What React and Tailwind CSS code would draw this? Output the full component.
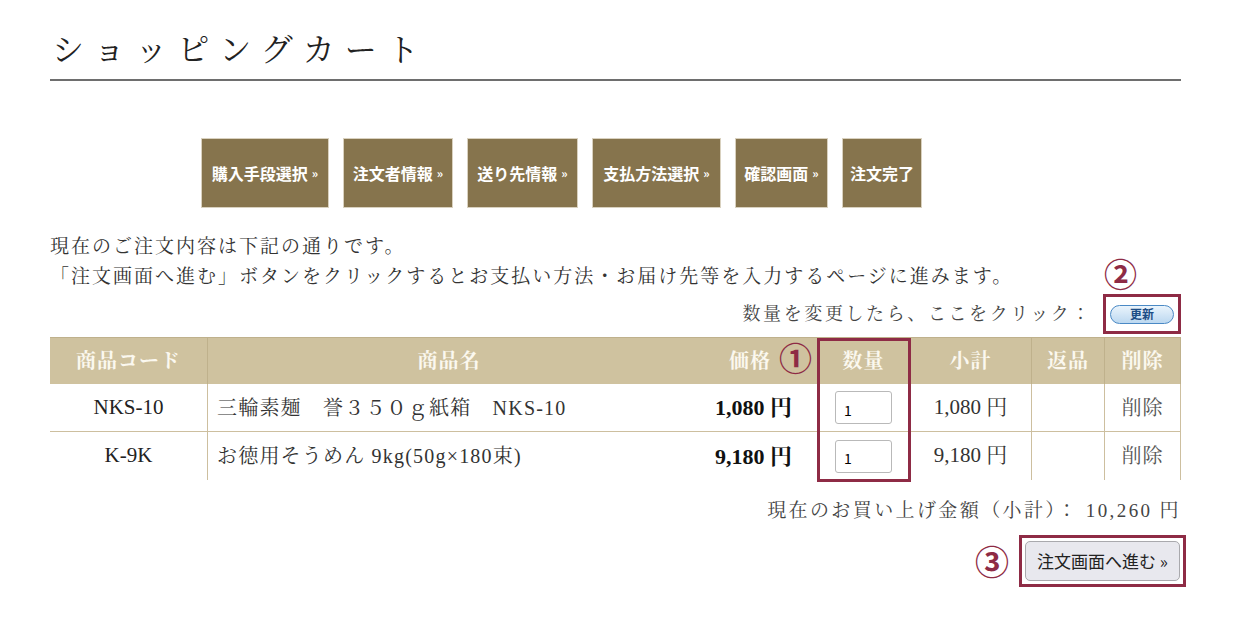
import React from "react";

const serif = { fontFamily: '"Liberation Serif", "Noto Serif CJK JP", "Noto Sans CJK JP", serif' };
const sans = { fontFamily: '"Noto Sans CJK JP", "Liberation Sans", sans-serif' };

const steps = [
  { t: "購入手段選択", w: "w-[128px]", arrow: true },
  { t: "注文者情報", w: "w-[110px]", arrow: true },
  { t: "送り先情報", w: "w-[111px]", arrow: true },
  { t: "支払方法選択", w: "w-[129px]", arrow: true },
  { t: "確認画面", w: "w-[93px]", arrow: true },
  { t: "注文完了", w: "w-[80px]", arrow: false },
];

const rows = [
  { code: "NKS-10", name: "三輪素麺　誉３５０ｇ紙箱　NKS-10", price: "1,080 円", sub: "1,080 円" },
  { code: "K-9K", name: "お徳用そうめん 9kg(50g×180束)", price: "9,180 円", sub: "9,180 円" },
];

function Circle({ n, className }) {
  return (
    <span className={"text-[#8e2b45] font-bold leading-none " + className} style={sans}>
      {n}
    </span>
  );
}

export default function App() {
  return (
    <div className="w-[1233px] h-[621px] bg-white text-[#333] overflow-hidden" style={serif}>
      <div className="mx-[50px] w-[1131px] pt-[28px]">
        {/* title */}
        <div className="border-b-2 border-[#6e6e6e] h-[53px] flex items-start">
          <h1 className="text-[32px] leading-[44px] tracking-[10px] pl-[2px] text-[#222] font-normal">
            ショッピングカート
          </h1>
        </div>

        {/* steps */}
        <div className="flex gap-[14px] ml-[151px] mt-[57px]">
          {steps.map((s) => (
            <div
              key={s.t}
              className={
                s.w +
                " h-[70px] bg-[#86744d] border border-[#d9d1bf] flex items-center justify-center text-white font-bold text-[16px]"
              }
              style={sans}
            >
              <span>{s.t}</span>
              {s.arrow && <span className="text-[12px] ml-[4px]">»</span>}
            </div>
          ))}
        </div>

        {/* text */}
        <div className="mt-[24px] text-[19px] tracking-[2px] leading-[30px] text-[#333]">
          <p>現在のご注文内容は下記の通りです。</p>
          <div className="relative">
            <p>「注文画面へ進む」ボタンをクリックするとお支払い方法・お届け先等を入力するページに進みます。</p>
            <Circle n="②" className="absolute left-[1054px] top-[-5px] text-[33px] tracking-normal" />
          </div>
        </div>

        <div className="flex justify-end items-center h-[40px] mt-[2px]">
          <span className="text-[18px] tracking-[2.6px] text-[#444] mr-[11px]">数量を変更したら、ここをクリック：</span>
          <div className="border-[3px] border-[#8e2b45] w-[78px] h-[40px] flex items-center justify-center">
            <button
              className="w-[64px] h-[19px] rounded-full border border-[#4a89c5] bg-gradient-to-b from-[#eaf4fc] to-[#bcd8f0] text-[#1d4d86] text-[12px] font-bold leading-none flex items-center justify-center"
              style={sans}
            >
              更新
            </button>
          </div>
        </div>

        {/* table */}
        <div className="relative mt-[3px]">
          <div className="grid grid-cols-[158px_482px_128px_92px_122px_73px_76px]">
            {[
              { t: "商品コード", c: "justify-center border-r border-[#bfb18c]" },
              { t: "商品名", c: "justify-center" },
              { t: "価格", c: "justify-end pr-[46px] border-r border-[#bfb18c]" },
              { t: "数量", c: "justify-center border-r border-[#bfb18c]" },
              { t: "小計", c: "justify-center border-r border-[#bfb18c]" },
              { t: "返品", c: "justify-center border-r border-[#bfb18c]" },
              { t: "削除", c: "justify-center border-r border-[#bfb18c]" },
            ].map((h) => (
              <div
                key={h.t}
                className={
                  "h-[47px] bg-[#cfc29f] border-t border-[#bfb18c] flex items-center text-[#fbf8ef] font-bold text-[20px] tracking-[1px] " +
                  h.c
                }
              >
                {h.t}
              </div>
            ))}
            {rows.map((r, i) => (
              <React.Fragment key={r.code}>
                <div className={"h-[48px] flex items-center justify-center border-r border-[#cdbf9f] text-[21px] text-[#222] " + (i === 0 ? "border-b" : "")}>
                  {r.code}
                </div>
                <div className={"h-[48px] flex items-center pl-[9px] text-[20px] tracking-[1.2px] text-[#333] border-[#cdbf9f] whitespace-nowrap " + (i === 0 ? "border-b" : "")}>
                  {r.name}
                </div>
                <div className={"h-[48px] flex items-center justify-end pr-[25px] text-[22px] font-bold text-[#111] border-r border-[#cdbf9f] " + (i === 0 ? "border-b" : "")}>
                  {r.price}
                </div>
                <div className={"h-[48px] flex items-center justify-center border-r border-[#cdbf9f] " + (i === 0 ? "border-b" : "")}>
                  <input
                    readOnly
                    value="1"
                    className="w-[57px] h-[33px] border border-[#b9b9b9] rounded-[3px] px-[8px] pt-[4px] text-[14px] text-black"
                    style={sans}
                  />
                </div>
                <div className={"h-[48px] flex items-center justify-center border-r border-[#cdbf9f] text-[21px] text-[#333] " + (i === 0 ? "border-b" : "")}>
                  {r.sub}
                </div>
                <div className={"h-[48px] border-r border-[#cdbf9f] " + (i === 0 ? "border-b" : "")} />
                <div className={"h-[48px] flex items-center justify-center border-r border-[#cdbf9f] text-[20px] tracking-[1px] text-[#555] " + (i === 0 ? "border-b" : "")}>
                  削除
                </div>
              </React.Fragment>
            ))}
          </div>
          <Circle n="①" className="absolute left-[729px] top-[4px] text-[33px]" />
          <div className="absolute left-[767px] top-[1px] w-[94px] h-[144px] border-[3px] border-[#8e2b45]" />
        </div>

        {/* total */}
        <div className="flex justify-end mt-[17px] text-[19px] tracking-[2.4px] text-[#444] leading-[28px]">
          現在のお買い上げ金額（小計）： 10,260 円
        </div>

        <div className="flex justify-end items-center mt-[10px] mr-[-5px]">
          <Circle n="③" className="text-[34px] mr-[10px]" />
          <div className="border-[3px] border-[#8e2b45] w-[167px] h-[52px] flex items-center justify-center">
            <button
              className="w-[155px] h-[40px] rounded-[5px] border border-[#a9a9ad] bg-[#e8e8ee] text-[17px] text-[#222]"
              style={sans}
            >
              注文画面へ進む »
            </button>
          </div>
        </div>
      </div>
    </div>
  );
}
